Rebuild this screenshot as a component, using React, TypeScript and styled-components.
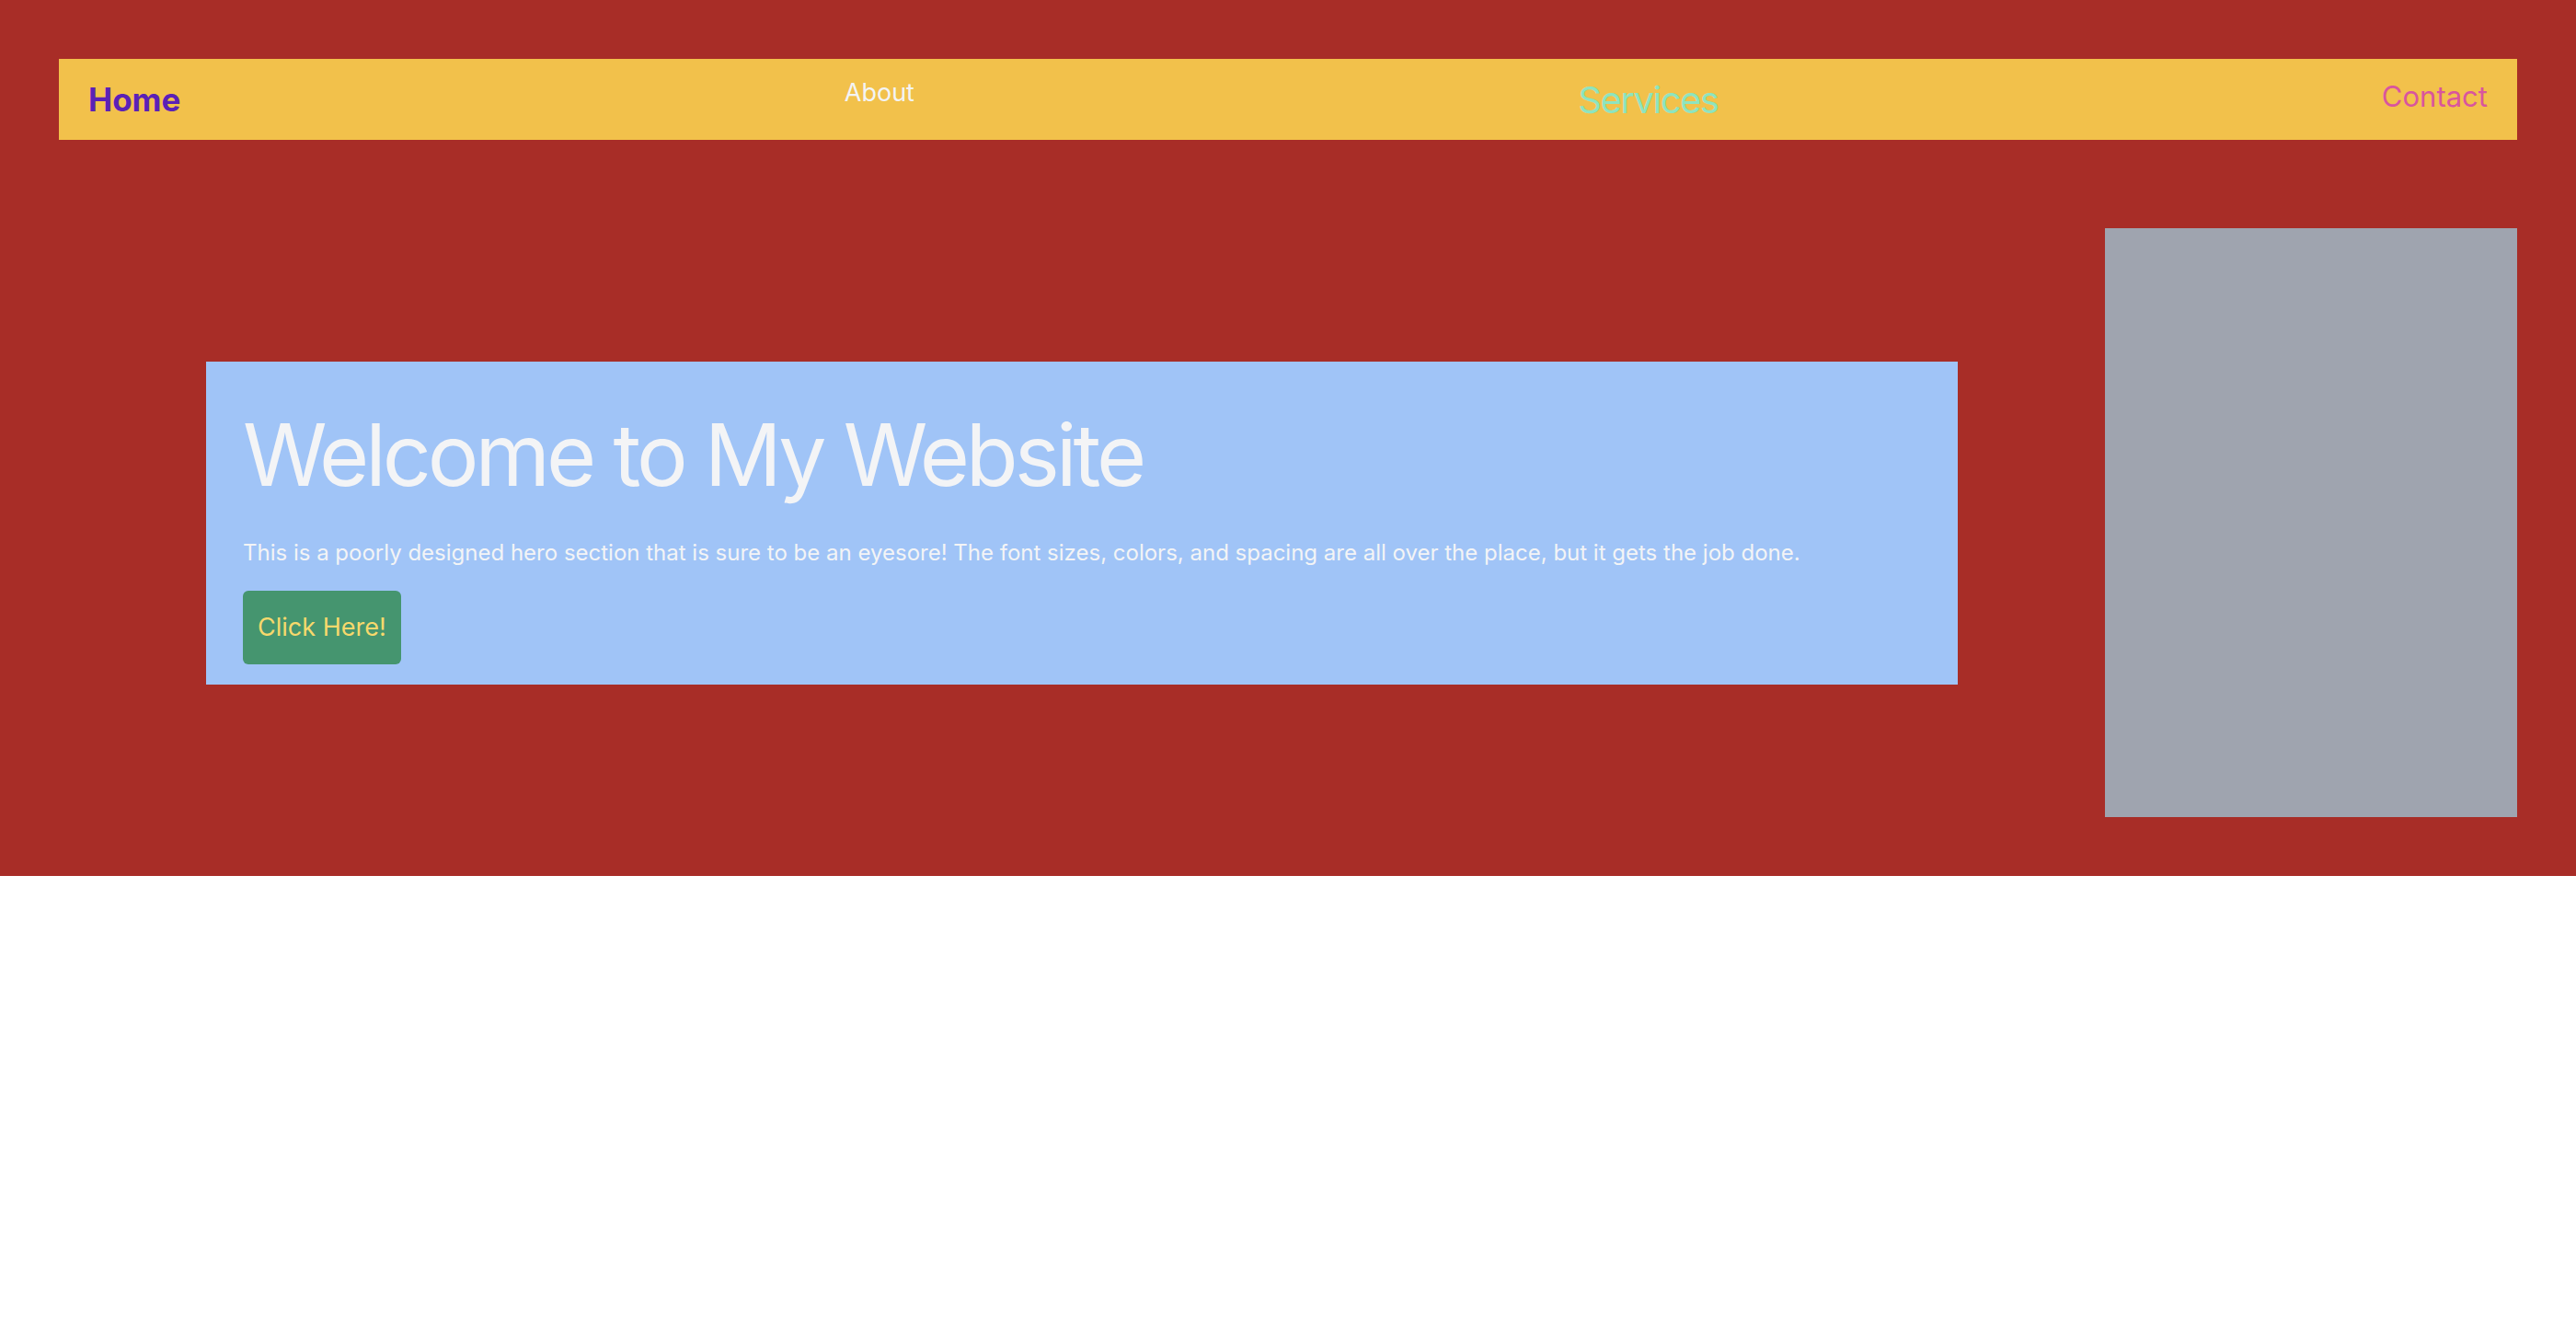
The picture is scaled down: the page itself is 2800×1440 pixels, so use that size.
import React from "react";
import styled, { createGlobalStyle } from "styled-components";

const GlobalStyle = createGlobalStyle`
  html, body {
    margin: 0;
    padding: 0;
    background: #ffffff;
    font-family: Inter, "Noto Sans", "Liberation Sans", sans-serif;
  }
  * { box-sizing: border-box; }
`;

const Hero = styled.section`
  background: #a82d27;
  padding: 64px;
  display: flex;
  flex-direction: column;
  gap: 96px;
`;

const Nav = styled.nav`
  height: 88px;
  background: #f2c14b;
  padding: 0 32px;
  display: flex;
  align-items: center;
  justify-content: space-between;
`;

const NavLink = styled.a<{ $color: string; $size: number; $weight?: number; $shift?: number; $track?: number }>`
  color: ${(p) => p.$color};
  font-size: ${(p) => p.$size}px;
  font-weight: ${(p) => p.$weight ?? 400};
  letter-spacing: ${(p) => p.$track ?? 0}px;
  line-height: 1;
  text-decoration: none;
  transform: translateY(${(p) => p.$shift ?? 0}px);
`;

const Body = styled.div`
  display: flex;
  align-items: center;
`;

const Panel = styled.div`
  flex: 1;
  margin: 0 160px;
  background: #a0c4f7;
  padding: 55px 40px 22px;
  display: flex;
  flex-direction: column;
  align-items: flex-start;
`;

const Title = styled.h1`
  margin: 0 0 48px;
  color: #f3f4f6;
  font-size: 93px;
  font-weight: 400;
  line-height: 1;
  letter-spacing: -4px;
`;

const Lead = styled.p`
  margin: 0 0 29px;
  color: #f3f4f6;
  font-size: 24px;
  line-height: 1;
`;

const Button = styled.button`
  height: 80px;
  padding: 0 16px;
  border: none;
  border-radius: 6px;
  background: #45956f;
  color: #f7d96c;
  font-family: inherit;
  font-size: 27px;
  line-height: 1;
  cursor: pointer;
`;

const Picture = styled.div`
  width: 448px;
  height: 640px;
  background: #9fa4af;
  flex-shrink: 0;
`;

export default function App() {
  return (
    <>
      <GlobalStyle />
      <Hero>
        <Nav>
          <NavLink href="#" $color="#5b21b6" $size={35} $weight={700}>
            Home
          </NavLink>
          <NavLink href="#" $color="#f3f4f6" $size={27} $shift={-8}>
            About
          </NavLink>
          <NavLink href="#" $color="#8ee4bf" $size={40} $shift={1} $track={-1.5}>
            Services
          </NavLink>
          <NavLink href="#" $color="#d9559e" $size={31} $shift={-4}>
            Contact
          </NavLink>
        </Nav>
        <Body>
          <Panel>
            <Title>Welcome to My Website</Title>
            <Lead>
              This is a poorly designed hero section that is sure to be an eyesore! The font sizes, colors, and
              spacing are all over the place, but it gets the job done.
            </Lead>
            <Button>Click Here!</Button>
          </Panel>
          <Picture />
        </Body>
      </Hero>
    </>
  );
}
